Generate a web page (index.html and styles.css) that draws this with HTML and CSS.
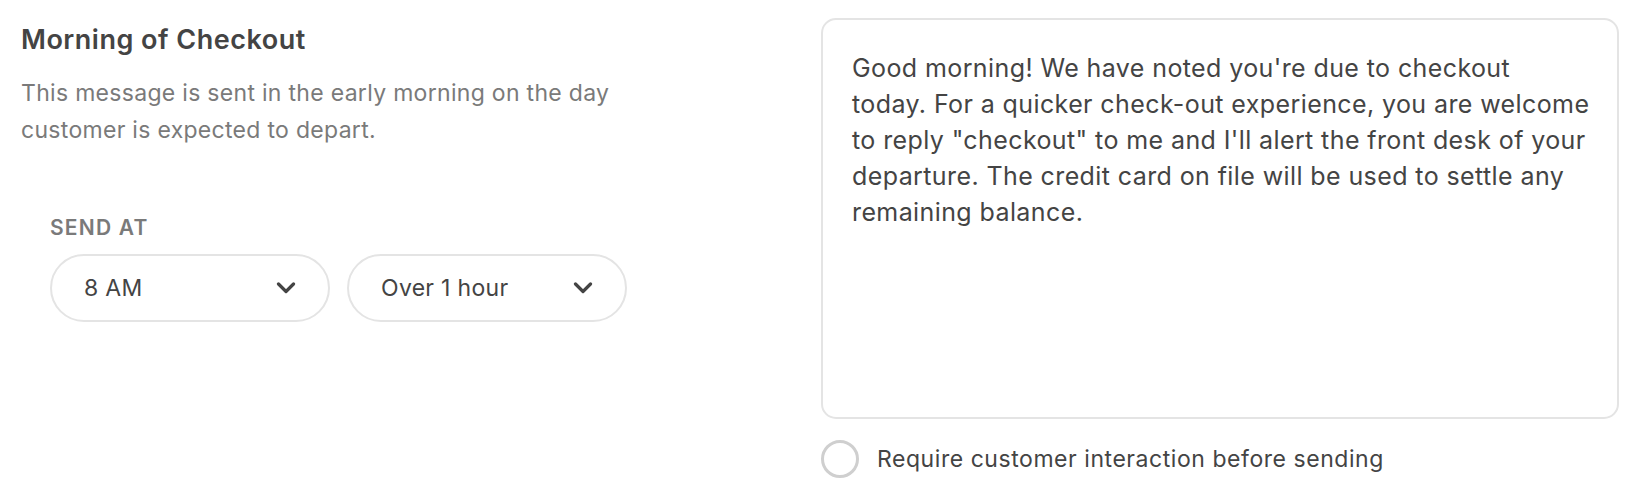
FILE: index.html
```html
<!DOCTYPE html>
<html lang="en">
<head>
    <meta charset="UTF-8">
    <meta name="viewport" content="width=device-width, initial-scale=1.0">
    <title>Morning of Checkout</title>
    <link rel="stylesheet" href="styles.css">
</head>
<body>

<!-- Bloque del mensaje automatico -->
<div class="message-row">
    <div class="message-info">
        <h2 class="message-title">Morning of Checkout</h2>
        <p class="message-desc">This message is sent in the early morning on the day<br>customer is expected to depart.</p>

        <div class="send-at">
            <div class="send-label">SEND AT</div>
            <div class="send-selects">
                <div class="pill-select">
                    <span>8 AM</span>
                    <svg class="chevron" width="20" height="12" viewBox="0 0 20 12"><path d="M2.5 2 L10 9.5 L17.5 2" fill="none" stroke="#444" stroke-width="3.2" stroke-linecap="round" stroke-linejoin="round"/></svg>
                </div>
                <div class="pill-select">
                    <span>Over 1 hour</span>
                    <svg class="chevron" width="20" height="12" viewBox="0 0 20 12"><path d="M2.5 2 L10 9.5 L17.5 2" fill="none" stroke="#444" stroke-width="3.2" stroke-linecap="round" stroke-linejoin="round"/></svg>
                </div>
            </div>
        </div>
    </div>

    <div class="message-edit">
        <div class="message-box">Good morning! We have noted you're due to checkout<br>today. For a quicker check-out experience, you are welcome<br>to reply "checkout" to me and I'll alert the front desk of your<br>departure. The credit card on file will be used to settle any<br>remaining balance.</div>

        <label class="radio-row">
            <span class="radio"></span>
            Require customer interaction before sending
        </label>
    </div>
</div>

</body>
</html>
```

FILE: styles.css
```css
/* Estilos generales */
body, html {
    margin: 0;
    padding: 0;
    background-color: #fff;
    font-family: 'Inter', 'Liberation Sans', sans-serif;
    color: #444;
}

.message-row {
    display: flex;
    padding: 18px 33px 0 21px;
    gap: 40px;
}

.message-info {
    flex: 1;
}

.message-title {
    margin: 6px 0 0;
    font-size: 27px;
    line-height: 32px;
    font-weight: 600;
    letter-spacing: 0.5px;
    color: #444;
}

.message-desc {
    margin: 19px 0 0;
    font-size: 23px;
    line-height: 37px;
    letter-spacing: 0.3px;
    color: #7a7a7a;
}

.send-at {
    margin: 67px 0 0 29px;
}

.send-label {
    font-size: 21px;
    line-height: 24px;
    font-weight: 600;
    letter-spacing: 1.2px;
    color: #7a7a7a;
}

.send-selects {
    display: flex;
    gap: 17px;
    margin-top: 14px;
}

.pill-select {
    width: 280px;
    height: 68px;
    box-sizing: border-box;
    border: 2px solid #e4e4e4;
    border-radius: 34px;
    display: flex;
    align-items: center;
    justify-content: space-between;
    padding: 0 32px;
    font-size: 23px;
    letter-spacing: 0.3px;
    color: #444;
}

.chevron {
    display: block;
}

.message-edit {
    width: 798px;
}

.message-box {
    box-sizing: border-box;
    height: 401px;
    border: 2px solid #e4e4e4;
    border-radius: 15px;
    padding: 30px 20px 30px 29px;
    font-size: 25px;
    line-height: 36px;
    letter-spacing: 0.4px;
    color: #444;
    white-space: nowrap;
}

.radio-row {
    display: flex;
    align-items: center;
    gap: 18px;
    margin-top: 21px;
    font-size: 23px;
    letter-spacing: 0.55px;
    color: #444;
}

.radio {
    width: 38px;
    height: 38px;
    box-sizing: border-box;
    border: 3px solid #cfcfcf;
    border-radius: 50%;
}
```
